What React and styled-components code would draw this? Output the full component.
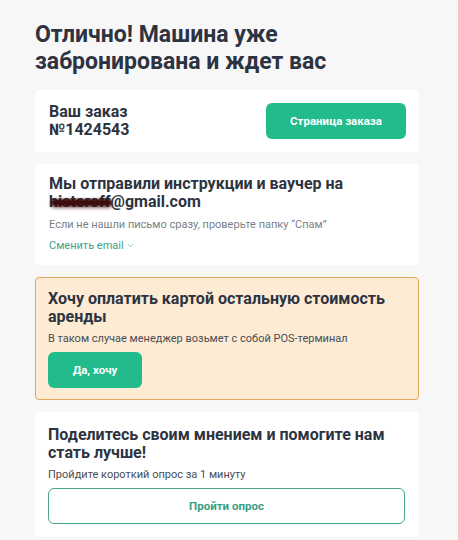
import React from 'react'
import styled, { createGlobalStyle } from 'styled-components'
import { ChevronDown } from 'lucide-react'

const GlobalStyle = createGlobalStyle`
  body {
    margin: 0;
    background: #f7f7f7;
    font-family: Roboto, "Noto Sans", Arial, sans-serif;
    color: #2d3340;
  }
`

const Page = styled.main`
  width: 384px;
  padding: 21px 0 4px 35px;
  display: flex;
  flex-direction: column;
  gap: 12px;
`

const Title = styled.h1`
  margin: 0 0 3px;
  font-size: 23px;
  line-height: 27px;
  font-weight: 700;
  color: #2d3340;
`

const Card = styled.section`
  background: ${(p) => (p.$accent ? '#fdebd4' : '#fff')};
  border: 1px solid ${(p) => (p.$accent ? '#e2a65c' : 'transparent')};
  border-radius: 4px;
  padding: ${(p) => p.$pad || '12px 12px 12px 13px'};
  display: flex;
  flex-direction: ${(p) => (p.$row ? 'row' : 'column')};
  align-items: ${(p) => (p.$row ? 'center' : 'stretch')};
  justify-content: space-between;
`

const Heading = styled.h2`
  margin: 0;
  font-size: 16px;
  line-height: 18px;
  font-weight: 700;
  color: #2d3340;
`

const Hidden = styled.span`
  position: relative;
  &::after {
    content: '';
    position: absolute;
    left: 2px;
    right: -1px;
    top: 7px;
    height: 7px;
    background: #3d0d0d;
    border-radius: 4px;
    filter: blur(1.2px);
    box-shadow: 0 2px 3px rgba(60, 10, 10, 0.6);
  }
`

const Note = styled.p`
  margin: ${(p) => p.$m || '5px 0 0'};
  font-size: 11px;
  line-height: 15px;
  color: ${(p) => (p.$muted ? '#7b7f86' : '#4a4d52')};
`

const LinkButton = styled.button`
  margin-top: 6px;
  padding: 0;
  border: 0;
  background: none;
  align-self: flex-start;
  display: flex;
  align-items: center;
  gap: 2px;
  font-family: inherit;
  font-size: 11px;
  line-height: 15px;
  color: #3ea386;
  cursor: pointer;
`

const Button = styled.button`
  height: 36px;
  width: ${(p) => p.$w || 'auto'};
  margin-top: ${(p) => p.$mt || '0'};
  align-self: ${(p) => (p.$full ? 'stretch' : 'flex-start')};
  border-radius: 6px;
  font-family: inherit;
  font-size: 11.5px;
  font-weight: 700;
  cursor: pointer;
  background: ${(p) => (p.$outline ? '#fff' : '#21bb8c')};
  color: ${(p) => (p.$outline ? '#3a9e80' : '#fff')};
  border: ${(p) => (p.$outline ? '1.5px solid #4aa68b' : '0')};
`

const App = () => {
  return (
    <>
      <GlobalStyle />
      <Page>
        <Title>
          Отлично! Машина уже
          <br />
          забронирована и ждет вас
        </Title>

        <Card $row>
          <Heading>
            Ваш заказ
            <br />
            №1424543
          </Heading>
          <Button $w="140px">Страница заказа</Button>
        </Card>

        <Card $pad="10px 13px 11px">
          <Heading>
            Мы отправили инструкции и ваучер на
            <br />
            <Hidden>histeroff</Hidden>@gmail.com
          </Heading>
          <Note $muted $m="6px 0 0">Если не нашли письмо сразу, проверьте папку “Спам”</Note>
          <LinkButton>
            Сменить email <ChevronDown size={9} strokeWidth={1.5} />
          </LinkButton>
        </Card>

        <Card $accent $pad="12px 12px 11px">
          <Heading>Хочу оплатить картой остальную стоимость аренды</Heading>
          <Note>В таком случае менеджер возьмет с собой POS-терминал</Note>
          <Button $w="94px" $mt="6px">Да, хочу</Button>
        </Card>

        <Card $pad="13px 13px 12px 12px">
          <Heading>Поделитесь своим мнением и помогите нам стать лучше!</Heading>
          <Note>Пройдите короткий опрос за 1 минуту</Note>
          <Button $outline $full $mt="6px">Пройти опрос</Button>
        </Card>
      </Page>
    </>
  )
}

export default App
